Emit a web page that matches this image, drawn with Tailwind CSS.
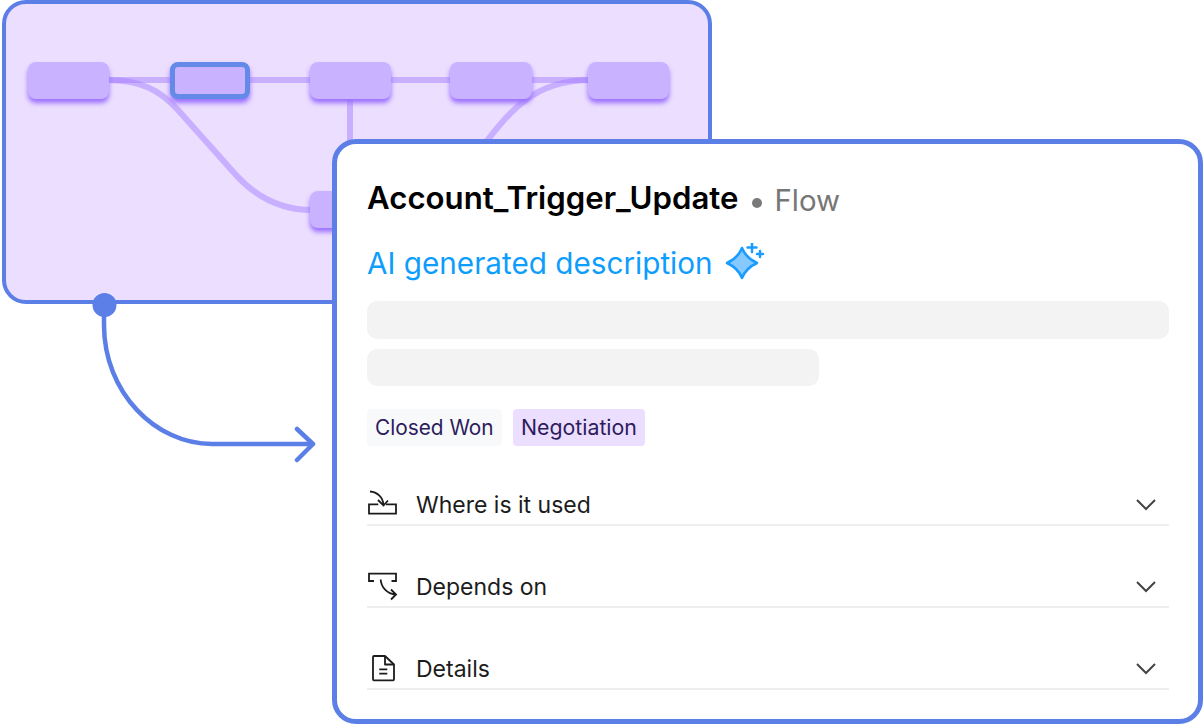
<!DOCTYPE html>
<html lang="en">
  <head>
    <meta charset="UTF-8" />
    <title>Account_Trigger_Update</title>
    <script src="https://cdn.jsdelivr.net/npm/@tailwindcss/browser@4"></script>
  </head>
  <body class="bg-white overflow-hidden font-['Inter',sans-serif]">
    <div class="relative w-[1204px] h-[728px]">
      <!-- flow diagram panel -->
      <div class="absolute left-[2px] top-0 w-[710px] h-[304px] rounded-[24px] border-[4px] border-[#5b7fe6] bg-[#ecdeff]"></div>
      <svg class="absolute left-0 top-0" width="720" height="470" viewBox="0 0 720 470" fill="none">
        <g stroke="#a67fff" stroke-opacity="0.5" stroke-width="6">
          <path d="M108 80H590" />
          <path d="M350 98V150" />
          <path d="M108 80C140 80 160 90 178 110L236 175C256 197 280 210 312 210" />
          <path d="M480 150C510 110 535 80 590 80" />
        </g>
        <path d="M104 305V325C104 392 155 444 212 444H313M297 429L313 444L297 460" stroke="#5b7fe6" stroke-width="4.500" stroke-linecap="round" stroke-linejoin="round" />
        <circle cx="104.500" cy="305" r="12" fill="#5b7fe6" />
      </svg>
      <div class="absolute left-[28px] top-[62px] w-[81px] h-[37px] rounded-[8px] bg-[#c9b2ff] shadow-[0_4px_5px_#9a6fff]"></div>
      <div class="absolute left-[170px] top-[62px] w-[80px] h-[37px] rounded-[8px] bg-[#c9b2ff] border-[5px] border-[#628ae6] shadow-[0_4px_5px_#9a6fff]"></div>
      <div class="absolute left-[310px] top-[62px] w-[81px] h-[37px] rounded-[8px] bg-[#c9b2ff] shadow-[0_4px_5px_#9a6fff]"></div>
      <div class="absolute left-[450px] top-[62px] w-[82px] h-[37px] rounded-[8px] bg-[#c9b2ff] shadow-[0_4px_5px_#9a6fff]"></div>
      <div class="absolute left-[588px] top-[62px] w-[81px] h-[37px] rounded-[8px] bg-[#c9b2ff] shadow-[0_4px_5px_#9a6fff]"></div>
      <div class="absolute left-[310px] top-[191px] w-[60px] h-[37px] rounded-[8px] bg-[#c9b2ff] shadow-[0_4px_5px_#9a6fff]"></div>

      <!-- detail card -->
      <div class="absolute left-[332px] top-[139px] w-[871px] h-[585px] rounded-[24px] border-[5px] border-[#5b7fe6] bg-white pt-[35px] pl-[30px] pr-[29px] flex flex-col">
        <div class="flex items-baseline h-[38px]">
          <span class="text-[31.200px] leading-[38px] font-semibold text-black">Account_Trigger_Update</span>
          <span class="ml-[14px] mr-[12px] w-[10px] h-[10px] rounded-full bg-[#7a7a7a] self-center mt-[9px]"></span>
          <span class="text-[29.400px] leading-[38px] text-[#767676] translate-y-[2px]">Flow</span>
        </div>
        <div class="flex items-center mt-[26px] h-[40px]">
          <span class="text-[29.700px] leading-[40px] text-[#0d9dfd]">AI generated description</span>
          <svg class="ml-[12px]" width="40" height="40" viewBox="0 0 40 40" fill="none">
            <path d="M17 5Q21 15 32 20Q21 25 17 35Q13 25 2 20Q13 15 17 5Z" fill="#86c9ff" stroke="#1a9cff" stroke-width="2.500" stroke-linejoin="round" />
            <path d="M27 0V9M22.500 4.500H31.500M35 8V14M32 11H38" stroke="#1a9cff" stroke-width="2.500" stroke-linecap="round" />
          </svg>
        </div>
        <div class="mt-[18px] h-[38px] rounded-[10px] bg-[#f3f3f3]"></div>
        <div class="mt-[10px] h-[37px] w-[452px] rounded-[10px] bg-[#f3f3f3]"></div>
        <div class="flex gap-[11px] mt-[23px]">
          <span class="h-[37px] w-[135px] pl-[8px] rounded-[4px] bg-[#f8f9fb] text-[#2d1c5c] text-[20.800px] leading-[37px]">Closed Won</span>
          <span class="h-[37px] w-[132px] pl-[8px] rounded-[4px] bg-[#ecdeff] text-[#2d1c5c] text-[21.300px] leading-[37px]">Negotiation</span>
        </div>
        <div class="mt-[44px] flex flex-col gap-[46px]">
          <div class="flex items-center h-[36px] pb-[3px] border-b-2 border-[#eeeeee]">
            <svg width="32" height="32" viewBox="0 0 32 32" fill="none" stroke="#1c1c1c" stroke-width="1.800">
              <path d="M11.300 14.300H2V23.700H29V14.300H19" />
              <path d="M3 1.500C10 2 16 7 16.500 15M11 10L16.500 15.500L21 10.500" />
            </svg>
            <span class="ml-[17px] text-[23px] text-[#1c1c1c]">Where is it used</span>
            <svg class="ml-auto mr-[13px] -mt-[2px]" width="20" height="12" viewBox="0 0 20 12" fill="none" stroke="#444444" stroke-width="2"><path d="M1 1L10 10L19 1" /></svg>
          </div>
          <div class="flex items-center h-[36px] pb-[3px] border-b-2 border-[#eeeeee]">
            <svg width="32" height="32" viewBox="0 0 32 32" fill="none" stroke="#1c1c1c" stroke-width="1.800">
              <path d="M7 9H2V1.700H29V9H24.500" />
              <path d="M13.700 7.500C14 15 20 22 29 22.500M24 17.500L29 22.500L24 27.500" />
            </svg>
            <span class="ml-[17px] text-[23px] text-[#1c1c1c]">Depends on</span>
            <svg class="ml-auto mr-[13px] -mt-[2px]" width="20" height="12" viewBox="0 0 20 12" fill="none" stroke="#444444" stroke-width="2"><path d="M1 1L10 10L19 1" /></svg>
          </div>
          <div class="flex items-center h-[36px] pb-[3px] border-b-2 border-[#eeeeee]">
            <svg width="32" height="32" viewBox="0 0 32 32" fill="none" stroke="#1c1c1c" stroke-width="1.800" stroke-linejoin="round">
              <path d="M7 2H18L27 10.500V25.300A1 1 0 0 1 26 26.300H7A1 1 0 0 1 6 25.300V3A1 1 0 0 1 7 2Z" />
              <path d="M18 2V10.500H27M12.300 15.300H20.300M12.300 19.700H20.300" />
            </svg>
            <span class="ml-[17px] text-[23px] text-[#1c1c1c]">Details</span>
            <svg class="ml-auto mr-[13px] -mt-[2px]" width="20" height="12" viewBox="0 0 20 12" fill="none" stroke="#444444" stroke-width="2"><path d="M1 1L10 10L19 1" /></svg>
          </div>
        </div>
      </div>
    </div>
  </body>
</html>
